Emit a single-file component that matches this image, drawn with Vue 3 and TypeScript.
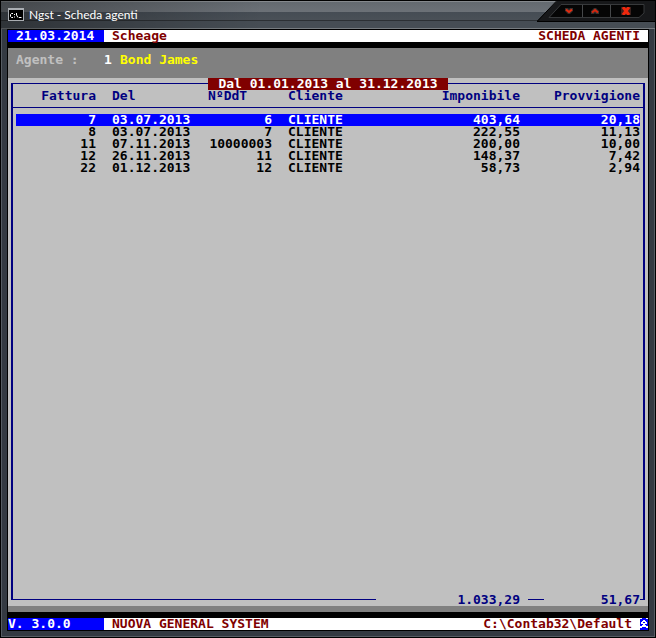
<script setup lang="ts">
import { ref } from 'vue'

interface Invoice {
  number: string
  date: string
  ddt: string
  customer: string
  taxable: string
  commission: string
}

const invoices: Invoice[] = [
  { number: '7', date: '03.07.2013', ddt: '6', customer: 'CLIENTE', taxable: '403,64', commission: '20,18' },
  { number: '8', date: '03.07.2013', ddt: '7', customer: 'CLIENTE', taxable: '222,55', commission: '11,13' },
  { number: '11', date: '07.11.2013', ddt: '10000003', customer: 'CLIENTE', taxable: '200,00', commission: '10,00' },
  { number: '12', date: '26.11.2013', ddt: '11', customer: 'CLIENTE', taxable: '148,37', commission: '7,42' },
  { number: '22', date: '01.12.2013', ddt: '12', customer: 'CLIENTE', taxable: '58,73', commission: '2,94' },
]

const selected = ref(0)
</script>

<template>
  <div class="window">
    <header class="titlebar">
      <svg class="app-icon" viewBox="0 0 16 13" aria-hidden="true">
        <rect width="16" height="13" fill="#a9adb2" />
        <rect x="1" y="2" width="14" height="10" fill="#000" />
        <path d="M5 5.5H3.5L2.5 6.5V8.500L3.500 9.500H5M6.500 6V7M6.500 8.500V9.500M8.500 5V7L10 9.500M11 9.500H13.500" fill="none" stroke="#fff" />
      </svg>
      <h1 class="caption">Ngst - Scheda agenti</h1>
      <div class="controls">
        <svg class="controls-shape" viewBox="0 0 118 22" aria-hidden="true">
          <path d="M0 21 20 1H118V21Z" fill="#17181a" />
          <path d="M0 21.500 20 .5H118M0 21.500H118" fill="none" stroke="#000" />
          <path d="M12 17.500 24 4.500H107V13L102 17.500Z" fill="#050505" stroke="#37393b" />
          <path d="M45.500 5V17M73.500 5V17" stroke="#454749" />
        </svg>
        <button class="control" type="button" aria-label="Riduci a icona">
          <svg viewBox="0 0 10 8"><path d="M1 1H4L5 2 6 1H9V4L6 7H4L1 4Z" fill="#35302e" /><path d="M2 2.500 5 5 8 2.500" fill="none" stroke="#e52b10" stroke-width="2" /></svg>
        </button>
        <button class="control" type="button" aria-label="Ingrandisci">
          <svg viewBox="0 0 10 8"><path d="M4 1H6L9 4V7H6L5 6 4 7H1V4Z" fill="#35302e" /><path d="M2 5.500 5 3 8 5.500" fill="none" stroke="#d8260e" stroke-width="2" /></svg>
        </button>
        <button class="control close" type="button" aria-label="Chiudi">
          <svg viewBox="0 0 10 8"><path d="M0 0H10V8H0Z" fill="#3a211d" /><path d="M2 0 8 8M8 0 2 8" stroke="#f0280d" stroke-width="3" /></svg>
        </button>
      </div>
    </header>

    <main class="screen">
      <div class="bar">
        <span class="bar-key date">21.03.2014</span>
        <span class="bar-text">Scheage</span>
        <span class="bar-end">SCHEDA AGENTI</span>
      </div>

      <section class="agent">
        <span class="agent-label">Agente :</span>
        <span class="agent-code">1</span>
        <span class="agent-name">Bond James</span>
      </section>

      <section class="list">
        <div class="frame">
          <h2 class="period">Dal 01.01.2013 al 31.12.2013</h2>
          <table class="grid">
            <colgroup>
              <col class="c-number" />
              <col class="c-date" />
              <col class="c-ddt" />
              <col />
              <col class="c-taxable" />
              <col class="c-commission" />
            </colgroup>
            <thead>
              <tr>
                <th class="num">Fattura</th>
                <th>Del</th>
                <th>NºDdT</th>
                <th>Cliente</th>
                <th class="num">Imponibile</th>
                <th class="num">Provvigione</th>
              </tr>
            </thead>
            <tbody>
              <tr
                v-for="(row, i) in invoices"
                :key="row.number"
                :class="{ selected: i === selected }"
                @click="selected = i"
              >
                <td class="num">{{ row.number }}</td>
                <td>{{ row.date }}</td>
                <td class="num">{{ row.ddt }}</td>
                <td>{{ row.customer }}</td>
                <td class="num">{{ row.taxable }}</td>
                <td class="num">{{ row.commission }}</td>
              </tr>
            </tbody>
          </table>
        </div>
        <div class="totals">
          <span class="rule rule-long"></span>
          <span class="total taxable">1.033,29</span>
          <span class="rule rule-short"></span>
          <span class="total commission">51,67</span>
          <span class="corner"></span>
        </div>
      </section>

      <footer class="bar bar-bottom">
        <span class="bar-key">V. 3.0.0</span>
        <span class="bar-text">NUOVA GENERAL SYSTEM</span>
        <span class="bar-end">C:\Contab32\Default</span>
        <button class="scroll" type="button" aria-label="Scorri">
          <svg viewBox="0 0 8 12" shape-rendering="crispEdges">
            <path d="M0 0H2V1H0ZM6 0H8V1H6ZM3 2H5V3H6V4H7V6H5V7H6V8H8V10H6V9H2V10H0V8H2V7H3V6H1V4H2V3H3ZM3 4V5H5V4Z" fill="#fff" fill-rule="evenodd" />
          </svg>
        </button>
      </footer>
    </main>
  </div>
</template>

<style>
body {
  margin: 0;
  background: #000;
}
</style>

<style scoped>
.window {
  box-sizing: border-box;
  display: flex;
  flex-direction: column;
  min-height: 100vh;
  padding: 0 6px 6px;
  border: solid #000;
  border-width: 0 1px 1px;
  background: #343a42;
  box-shadow: inset 1px 0 #565c63, inset -1px -1px #565c63;
}

.titlebar {
  display: flex;
  align-items: center;
  gap: 5px;
  height: 29px;
  margin: 0 -6px;
  padding-left: 7px;
  background:
    linear-gradient(90deg, #0005, #0000 40%),
    linear-gradient(#000 1px, #85898d 1px, #85898d 2px, #646a70 2px, #6c7177 12px, #454c54 12px, #4a5057 20px, #2c3034 20px, #2c3034 21px, #464d54 21px, #464d54 28px, #777c80 28px);
}

.app-icon {
  width: 16px;
  height: 13px;
}

.caption {
  flex: 1;
  margin: 0;
  color: #fff;
  font: 400 12px/16px Lato, "Open Sans", sans-serif;
}

.controls {
  position: relative;
  display: grid;
  grid-template-columns: 26px 26px 36px;
  align-self: flex-start;
  box-sizing: border-box;
  width: 118px;
  height: 22px;
  padding: 5px 11px 5px 19px;
}

.controls-shape {
  position: absolute;
  inset: 0;
  width: 100%;
  height: 100%;
}

.control {
  position: relative;
  display: flex;
  align-items: center;
  justify-content: center;
  padding: 0;
  border: 0;
  background: none;
}

.control svg {
  width: 10px;
  height: 8px;
}

.screen {
  display: flex;
  flex: 1;
  flex-direction: column;
  border: solid #000;
  border-width: 1px 1px 0;
  color: #000;
  background: #c0c0c0;
  font: 700 13px/12px "DejaVu Sans Mono", "Liberation Mono", monospace;
  white-space: pre;
}

.bar {
  display: flex;
  height: 12px;
  color: #800000;
  background: #fff;
  border-bottom: 6px solid #000;
}

.bar-bottom {
  border-top: 6px solid #000;
  border-bottom: 1px solid #000;
}

.bar-key {
  box-sizing: border-box;
  width: 96px;
  color: #fff;
  background: #00f;
}

.date {
  padding-left: 8px;
}

.bar-text {
  flex: 1;
  padding-left: 8px;
}

.bar-end {
  padding-right: 8px;
}

.scroll {
  display: flex;
  width: 8px;
  height: 12px;
  padding: 0;
  border: 0;
  background: #00f;
}

.scroll svg {
  width: 8px;
  height: 12px;
}

.agent {
  display: flex;
  padding: 6px 8px 12px;
  background: #808080;
}

.agent-label {
  width: 88px;
  color: #c0c0c0;
}

.agent-code {
  width: 16px;
  color: #fff;
}

.agent-name {
  color: #ff0;
}

.list {
  display: flex;
  flex: 1;
  flex-direction: column;
  border-bottom: 6px solid #808080;
}

.frame {
  position: relative;
  flex: 1;
  margin: 5px 3px 0;
  border: solid #000080;
  border-width: 1px 2px 0;
}

.period {
  position: absolute;
  top: -6px;
  left: 50%;
  box-sizing: border-box;
  width: 240px;
  margin: 0 0 0 -120px;
  color: #fff;
  background: #800000;
  font: inherit;
  text-align: center;
}

.grid {
  width: 100%;
  padding-top: 6px;
  border-spacing: 0;
  table-layout: fixed;
}

.c-number {
  width: 91px;
}

.c-date {
  width: 96px;
}

.c-ddt {
  width: 80px;
}

.c-taxable {
  width: 128px;
}

.c-commission {
  width: 115px;
}

.grid th,
.grid td {
  padding: 0 8px;
  text-align: left;
  background-clip: padding-box;
}

.grid th {
  padding-bottom: 5px;
  border-bottom: 1px solid #000080;
  color: #000080;
}

.grid .num {
  text-align: right;
}

.grid th:last-child {
  padding-right: 3px;
}

.grid td:first-child {
  border-left: 3px solid transparent;
}

.grid td:last-child {
  padding-right: 0;
  border-right: 3px solid transparent;
}

.grid tbody::before {
  display: table-row;
  height: 6px;
  content: "";
}

.selected td {
  color: #fff;
  background-color: #00f;
}

.totals {
  display: flex;
  height: 12px;
  margin: 0 3px;
  color: #000080;
}

.rule {
  height: 5px;
  border-bottom: 1px solid #000080;
}

.rule-long {
  flex: 1;
  border-left: 2px solid #000080;
}

.rule-short {
  width: 16px;
  margin-left: 8px;
}

.total {
  text-align: right;
}

.taxable {
  width: 144px;
}

.commission {
  width: 96px;
}

.corner {
  width: 3px;
  height: 5px;
  border-right: 2px solid #000080;
  border-bottom: 1px solid #000080;
}
</style>
